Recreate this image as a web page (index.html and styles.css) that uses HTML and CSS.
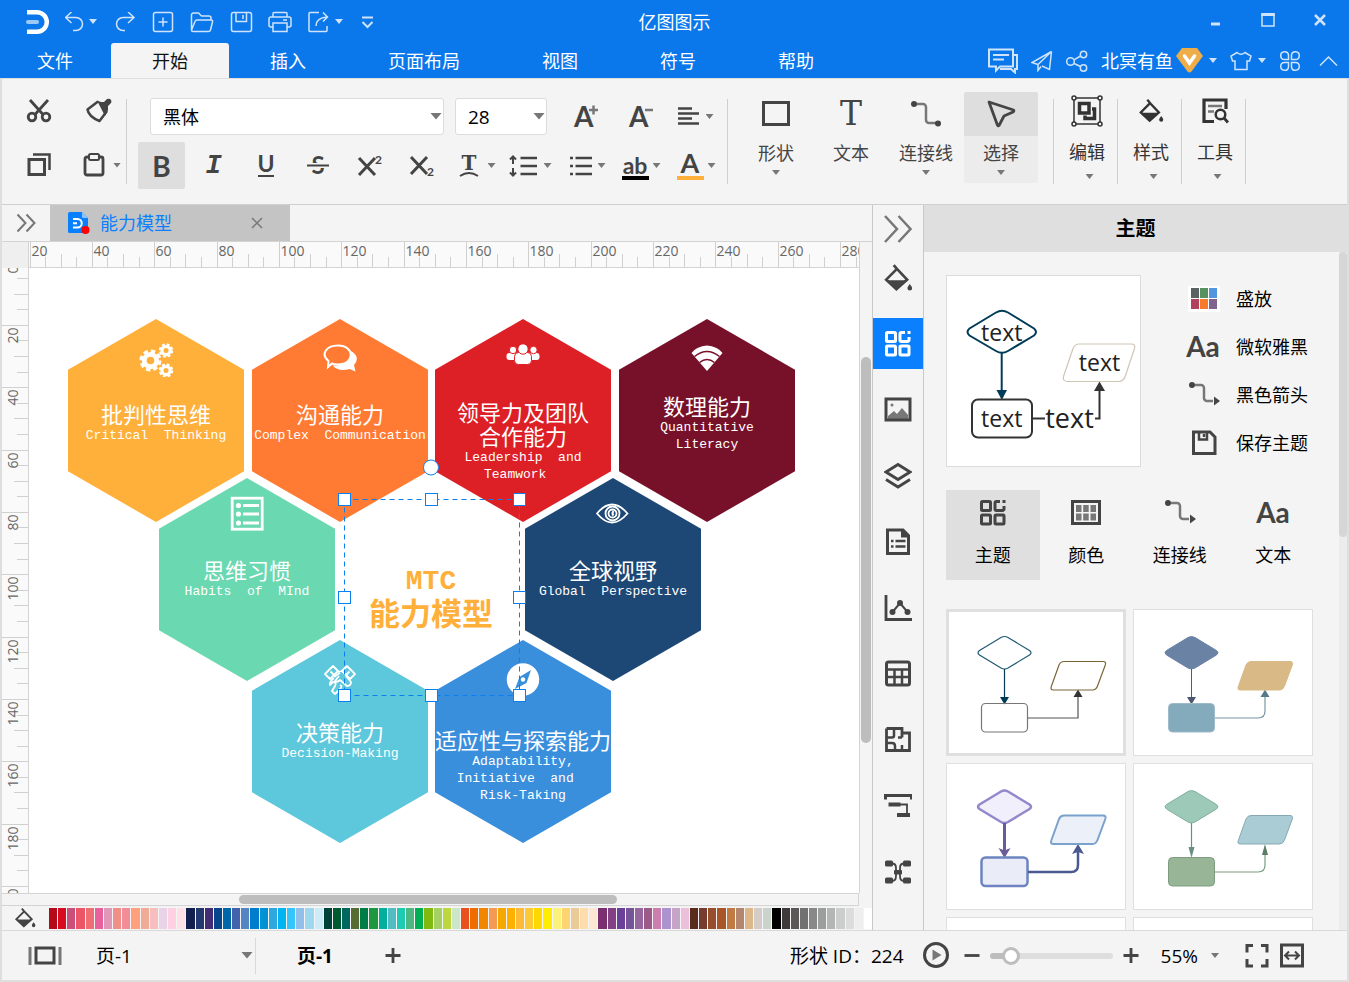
FILE: index.html
```html
<!DOCTYPE html>
<html lang="zh-CN">
<head>
  <meta charset="utf-8">
  <meta name="viewport" content="width=device-width, initial-scale=1">
  <title>亿图图示</title>
  <link rel="stylesheet" href="styles.css">
</head>
<body>
  <!-- Shared icons -->
  <svg class="sprite" aria-hidden="true">
    <symbol id="i-bucket" viewBox="0 0 28 28">
      <path d="M10 2l3 3.500M13 5.500L3 15.500l9.500 9 10-9z" stroke-width="2.500"/>
      <path d="M3 16h19.500L12.500 25.500z" fill="currentColor" stroke="none"/>
      <path d="M25 19.500c1.500 2 2.200 3 2.200 4a2.200 2.200 0 0 1-4.400 0c0-1 .7-2 2.200-4z" fill="currentColor" stroke="none"/>
    </symbol>
    <symbol id="i-theme" viewBox="0 0 28 28">
      <g stroke-width="3">
        <rect x="2.500" y="2.500" width="9" height="9" rx="1"/>
        <rect x="2.500" y="16" width="9" height="9" rx="1"/>
        <rect x="16" y="16" width="9" height="9" rx="1"/>
        <path d="M21 2.500h-3.500a1.500 1.500 0 0 0-1.500 1.500v6a1.500 1.500 0 0 0 1.500 1.500h6a1.500 1.500 0 0 0 1.500-1.500V7M23.500 2.500h3"/>
      </g>
    </symbol>
    <symbol id="i-link" viewBox="0 0 32 28">
      <path d="M6 4h7a3 3 0 0 1 3 3v13a3 3 0 0 0 3 3h7" stroke="#777" stroke-width="2.500"/>
      <circle cx="4" cy="4" r="3" fill="currentColor" stroke="none"/>
      <circle cx="28" cy="23.500" r="3" fill="currentColor" stroke="none"/>
    </symbol>
    <symbol id="i-link-arrow" viewBox="0 0 32 28">
      <path d="M7 4h6a3 3 0 0 1 3 3v10a3 3 0 0 0 3 3h6" stroke="#777" stroke-width="2.500"/>
      <circle cx="4" cy="4" r="3" fill="currentColor" stroke="none"/>
      <path d="M26 15.500l6 4.500-6 4.500z" fill="currentColor" stroke="none"/>
    </symbol>
    <symbol id="i-gear" viewBox="-12 -12 24 24">
      <circle r="6.500" stroke="#fff" stroke-width="5" fill="none"/>
      <circle r="9.500" stroke="#fff" stroke-width="4" stroke-dasharray="4.460 3" fill="none"/>
    </symbol>
  </svg>

  <header class="header">
    <div class="titlebar">
      <div class="quick">
        <svg class="icon" width="24" height="26" viewBox="0 0 24 26" role="img" aria-label="亿图">
          <path d="M1 3.200h10a9.800 9.800 0 0 1 0 19.600H1" stroke="#fff" stroke-width="4.400"/>
          <path d="M2 13h9" stroke="#9ccaf8" stroke-width="4" stroke-linecap="round"/>
        </svg>
        <button class="quick-btn" aria-label="撤销">
          <svg class="icon thin" width="20" height="20" viewBox="0 0 20 20"><path d="M6.500 0L.5 5.500 6.500 11M.5 5.500H11a6.500 6.500 0 0 1 0 13H8"/></svg>
          <i class="caret"></i>
        </button>
        <button class="quick-btn" aria-label="重做">
          <svg class="icon thin" width="24" height="20" viewBox="0 0 24 20"><path d="M16 0l6 5.500L16 11M22 5.500H11a6.500 6.500 0 0 0 0 13h2"/></svg>
        </button>
        <button class="quick-btn" aria-label="新建">
          <svg class="icon thin" width="24" height="22" viewBox="0 0 24 22"><rect x="2.500" y="1.500" width="19" height="19" rx="2"/><path d="M12 6.500v9M7.500 11h9"/></svg>
        </button>
        <button class="quick-btn" aria-label="打开">
          <svg class="icon thin" width="24" height="22" viewBox="0 0 24 22"><path d="M1.500 19V4a2 2 0 0 1 2-2h5l3 3h7.500a2 2 0 0 1 2 2v2M1.500 19L5 10.500q.5-1.500 2-1.500h14q2 0 1.500 2l-2 8q-.5 1.500-2 1.500H3q-1.500 0-1.500-1.500z"/></svg>
        </button>
        <button class="quick-btn" aria-label="保存">
          <svg class="icon thin" width="24" height="22" viewBox="0 0 24 22"><rect x="2.500" y="1.500" width="20" height="19" rx="2"/><path d="M7 1.500v9h10.500v-9M14 4v4"/></svg>
        </button>
        <button class="quick-btn" aria-label="打印">
          <svg class="icon thin" width="24" height="22" viewBox="0 0 24 22"><path d="M5 6V2.500q0-1 1-1h12q1 0 1 1V6M5 16H3q-2 0-2-2V8q0-2 2-2h18q2 0 2 2v6q0 2-2 2h-2M5 12h14v8.500H5zM15 9h4"/></svg>
        </button>
        <button class="quick-btn" aria-label="导出">
          <svg class="icon thin" width="24" height="22" viewBox="0 0 24 22"><path d="M12 1.500H3q-1 0-1 1v17q0 1 1 1h16q1 0 1-1V15M9 15q0-8 11-9M16 1.500L20.500 6 16 10.500"/></svg>
          <i class="caret"></i>
        </button>
        <button class="quick-btn" aria-label="更多">
          <svg class="icon" width="18" height="14" viewBox="0 0 18 14"><path d="M4 2.500h11M4.500 7L9.500 12l5-5"/></svg>
        </button>
      </div>
      <h1 class="app-title">亿图图示</h1>
      <div class="window-btns">
        <button aria-label="最小化"><svg class="icon" width="16" height="16" viewBox="0 0 16 16"><path d="M3 12h9" stroke-width="3"/></svg></button>
        <button aria-label="最大化"><svg class="icon" width="16" height="16" viewBox="0 0 16 16"><path d="M2 2v12h12V2" stroke-width="1.500"/><path d="M1.200 2.500h13.600" stroke-width="3"/></svg></button>
        <button aria-label="关闭"><svg class="icon" width="16" height="16" viewBox="0 0 16 16"><path d="M3 3l10 10M13 3L3 13" stroke-width="2.500"/></svg></button>
      </div>
    </div>

    <div class="menubar">
      <nav class="tabs">
        <button class="tab tab-file">文件</button>
        <button class="tab active">开始</button>
        <button class="tab">插入</button>
        <button class="tab">页面布局</button>
        <button class="tab">视图</button>
        <button class="tab">符号</button>
        <button class="tab">帮助</button>
      </nav>
      <div class="account">
        <button aria-label="消息"><svg class="icon" width="30" height="26" viewBox="0 0 30 26"><path d="M1 1.500h24v17H12l-4 4v-4H1zM25 7h4v14h-2v3.500L23 21H12M5 7h16M5 11.500h11"/></svg></button>
        <button aria-label="发送"><svg class="icon thin" width="22" height="22" viewBox="0 0 22 22"><path d="M20.500 1.500L1 12.500l6 2v6l3-4M20.500 1.500L7 14.500M20.500 1.500l-2 18-7.500-3.500"/></svg></button>
        <button aria-label="分享"><svg class="icon thin" width="22" height="22" viewBox="0 0 22 22"><circle cx="4.500" cy="11.500" r="3.800"/><circle cx="17.500" cy="4.500" r="3.200"/><circle cx="17.500" cy="18" r="3.200"/><path d="M8 9.800l6.500-3.800M8 13.500l6.500 3"/></svg></button>
        <button class="user">
          <span>北冥有鱼</span>
          <svg width="27" height="25" viewBox="0 0 27 25"><path d="M6 0h15l6 8-11.500 15.500q-2 2-4 0L0 8z" fill="#edad48"/><path d="M8.500 8l5 7 5-7" fill="none" stroke="#fff" stroke-width="3.500" stroke-linecap="round"/></svg>
          <i class="caret"></i>
        </button>
        <button class="user" aria-label="皮肤">
          <svg class="icon thin" width="22" height="20" viewBox="0 0 22 20"><path d="M7 1.500q4 3.500 8 0l6 3.500-1.500 5H17v8.500H5V10H2.500L1 5z"/></svg>
          <i class="caret"></i>
        </button>
        <button aria-label="应用"><svg class="icon thin" width="22" height="22" viewBox="0 0 22 22"><path d="M9.500 9.500V5.200a3.900 3.900 0 1 0-4 4.300zM12.500 9.500V5.200a3.900 3.900 0 1 1 4 4.300zM9.500 12.500v4.300a3.900 3.900 0 1 1-4-4.300zM12.500 12.500v4.300a3.900 3.900 0 1 0 4-4.300z"/></svg></button>
        <button aria-label="收起"><svg class="icon thin" width="30" height="12" viewBox="0 0 30 12"><path d="M6 10.500L14.500 2l8.500 8.500"/></svg></button>
      </div>
    </div>
  </header>

  <div class="frame">
    <!-- Ribbon -->
    <section class="ribbon">
      <div class="clipboard">
        <button aria-label="剪切"><svg class="icon" width="26" height="26" viewBox="0 0 26 26"><path d="M4 2l13 14.500M22 2L9 16.500" stroke-width="2.800"/><circle cx="6" cy="19" r="3.800" stroke-width="2.800"/><circle cx="20" cy="19" r="3.800" stroke-width="2.800"/></svg></button>
        <button aria-label="格式刷"><svg class="icon" width="28" height="26" viewBox="0 0 28 26"><path d="M14 3.500L3.500 11.500q1 7 12 11.500l7.500-10" stroke-width="2.500" stroke-linejoin="round"/><path d="M13 2.500l4 1.500 3 0 3-3q3-1 4 1t0 3l-3 3v4l-3 6z" fill="currentColor" stroke="none"/></svg></button>
        <button aria-label="复制"><svg class="icon" width="26" height="26" viewBox="0 0 26 26"><rect x="3" y="7.500" width="15.500" height="15" stroke-width="3"/><path d="M7 2.500h16.500V18" stroke-width="2.500"/></svg></button>
        <button class="paste" aria-label="粘贴"><svg class="icon" width="24" height="26" viewBox="0 0 24 26"><rect x="3" y="5" width="18" height="18" rx="2" stroke-width="2.800"/><rect x="7" y="2" width="10" height="6" rx="1.500" fill="#f4f4f4"/></svg><i class="caret"></i></button>
      </div>
      <span class="divider"></span>

      <div class="font-group">
        <div class="font-row">
          <span class="dropdown font-name"><select aria-label="字体"><option>黑体</option></select></span>
          <span class="dropdown font-size"><select aria-label="字号"><option>28</option></select></span>
          <span class="font-steps">
            <button class="step" aria-label="增大字号"><svg class="glyph" width="30" height="28"><text x="3" y="24" font-size="28">A</text><path d="M18 7h9M22.500 2.500v9" stroke="#777" stroke-width="2.500"/></svg></button>
            <button class="step" aria-label="减小字号"><svg class="glyph" width="30" height="28"><text x="3" y="24" font-size="28">A</text><path d="M19 7h8" stroke="#777" stroke-width="2.500"/></svg></button>
            <button class="split" aria-label="对齐"><svg class="icon" width="28" height="28" viewBox="0 0 28 28"><path d="M5 5.500h14M5 10.500h21M5 15.500h14M5 20.500h21" stroke-width="2.500"/></svg><i class="caret"></i></button>
          </span>
        </div>
        <div class="format-row">
          <button class="format active" aria-label="加粗"><span class="bold">B</span></button>
          <button class="format" aria-label="斜体"><span class="italic">I</span></button>
          <button class="format" aria-label="下划线"><svg class="glyph" width="28" height="28"><text x="14" y="20" font-size="23" text-anchor="middle">U</text><path d="M6 24h16"/></svg></button>
          <button class="format" aria-label="删除线"><svg class="glyph" width="28" height="28"><text x="14" y="22" font-size="24" text-anchor="middle">S</text><path d="M3 13.500h22" stroke="#f4f4f4" stroke-width="5"/><path d="M3 13.500h22"/></svg></button>
          <button class="format" aria-label="上标"><svg class="glyph" width="28" height="28"><path d="M3 6l16 17M19 6L3 23" stroke-width="3"/><text x="19" y="12" font-size="12">2</text></svg></button>
          <button class="format" aria-label="下标"><svg class="glyph" width="28" height="28"><path d="M3 5l16 17M19 5L3 22" stroke-width="3"/><text x="19" y="24" font-size="12">2</text></svg></button>
          <button class="split" aria-label="文字效果"><svg class="glyph" width="28" height="28"><text class="slab strong" x="14" y="18" font-size="20" text-anchor="middle">T</text><path d="M5 24q9-6 18 0"/></svg><i class="caret"></i></button>
          <button class="split" aria-label="行距"><svg class="icon" width="30" height="28" viewBox="0 0 30 28"><path d="M4 5v7M1 7.500L4 4.500l3 3M4 16v7M1 20.500l3 3 3-3"/><path d="M11.500 6H28M11.500 14H28M11.500 22H28" stroke-width="2.500"/></svg><i class="caret"></i></button>
          <button class="split" aria-label="项目符号"><svg class="icon" width="28" height="28" viewBox="0 0 28 28"><path d="M10.500 6H27M10.500 14H27M10.500 22H27M5 6h3M5 14h3M5 22h3" stroke-width="2.500"/></svg><i class="caret"></i></button>
          <button class="split" aria-label="突出显示"><svg class="glyph" width="28" height="28"><text x="15" y="22" font-size="23" text-anchor="middle">ab</text><path d="M2 26h27" stroke="#000" stroke-width="4"/></svg><i class="caret"></i></button>
          <button class="split" aria-label="字体颜色"><svg class="glyph" width="28" height="28"><text x="15" y="21" font-size="27" text-anchor="middle">A</text><path d="M2 26h27" stroke="#ffb03b" stroke-width="4"/></svg><i class="caret"></i></button>
        </div>
      </div>
      <span class="divider"></span>

      <div class="tools">
        <button class="tool"><span class="tool-icon"><svg class="icon" width="30" height="28" viewBox="0 0 30 28"><rect x="2.500" y="2.500" width="25" height="22" stroke-width="3"/></svg></span>形状<i class="caret"></i></button>
        <button class="tool"><span class="tool-icon"><svg class="glyph" width="34" height="34"><text class="slab" x="17" y="28" font-size="33" text-anchor="middle">T</text></svg></span>文本</button>
        <button class="tool"><span class="tool-icon"><svg class="icon" width="32" height="28"><use href="#i-link"/></svg></span>连接线<i class="caret"></i></button>
        <button class="tool active"><span class="tool-icon"><svg class="icon" width="30" height="30" viewBox="0 0 30 30"><path d="M3 3l24.500 8q1 1-.5 2l-9 4-5 9.500q-1 1-1.600-.5z" stroke-width="2.800" stroke-linejoin="round"/></svg></span>选择<i class="caret"></i></button>
      </div>
      <span class="divider"></span>
      <button class="tool tool-menu"><span class="tool-icon"><svg class="icon" width="32" height="32" viewBox="0 0 32 32"><path d="M3 3h26v26H3z" stroke-width="1.500"/><g fill="#f4f4f4" stroke-width="1.500"><circle cx="3" cy="3" r="2"/><circle cx="29" cy="3" r="2"/><circle cx="3" cy="29" r="2"/><circle cx="29" cy="29" r="2"/></g><rect x="8.500" y="8.500" width="9.500" height="9.500" stroke-width="3.500"/><path d="M21 14h2.500v9.500H14v-3" stroke-width="3.500"/></svg></span>编辑<i class="caret"></i></button>
      <span class="divider"></span>
      <button class="tool tool-menu"><span class="tool-icon"><svg class="icon" width="26" height="26"><use href="#i-bucket"/></svg></span>样式<i class="caret"></i></button>
      <span class="divider"></span>
      <button class="tool tool-menu"><span class="tool-icon"><svg class="icon" width="28" height="28" viewBox="0 0 28 28"><path d="M13 24.500H3V3h22v9" stroke-width="3.200"/><path d="M7 9h14M7 14.500h6" stroke="#777" stroke-width="2.500"/><circle cx="19.500" cy="17.500" r="4.800" stroke-width="2.500"/><path d="M23 21l4 4.500" stroke-width="2.800"/></svg></span>工具<i class="caret"></i></button>
      <span class="divider"></span>
    </section>

    <main class="workspace">
      <section class="document">
        <div class="doc-tabs">
          <button class="expand" aria-label="展开"><svg class="icon" width="20" height="20" viewBox="0 0 20 20"><path d="M1.500 1.500l8 8.500-8 8.500M10.500 1.500l8 8.500-8 8.500"/></svg></button>
          <div class="doc-tab">
            <svg width="22" height="22" viewBox="0 0 22 22"><path d="M1.500 0H14l6 6v13.500q0 1.500-1.500 1.500h-17Q0 21 0 19.500v-18Q0 0 1.500 0z" fill="#0a80ff"/><path d="M14 0v4.500q0 1.500 1.500 1.500H20z" fill="#8fc5ff"/><path d="M5 7h4.500a4 4 0 0 1 0 8.500H5M5 11.200h4" fill="none" stroke="#fff" stroke-width="2"/><circle cx="17.500" cy="18" r="4" fill="red"/></svg>
            <span>能力模型</span>
            <button aria-label="关闭标签"><svg class="icon thin" width="12" height="12" viewBox="0 0 12 12"><path d="M1 1l10 10M11 1L1 11"/></svg></button>
          </div>
        </div>

        <div class="board">
          <div class="corner"></div>
          <svg class="ruler ruler-x" id="rulerX"></svg>
          <div class="corner-end"></div>
          <svg class="ruler ruler-y" id="rulerY"></svg>

          <div class="canvas">
            <div class="node thinking">
              <svg class="node-icon" width="36" height="36" viewBox="0 0 36 36"><use href="#i-gear" x="1" y="8" width="23" height="23"/><use href="#i-gear" x="20.500" y="2" width="15" height="15"/><use href="#i-gear" x="20.500" y="22" width="15" height="15"/></svg>
              <div class="node-text"><h2>批判性思维</h2><p>Critical  Thinking</p></div>
            </div>
            <div class="node communication">
              <svg class="node-icon" width="36" height="36" viewBox="0 0 36 36"><path d="M29 10q10 6 3 14l1.500 6.500-6-2.500q-11 3-17-3.500 18 1 18.500-14.500z" fill="#fff"/><path d="M16 4.500c17 0 17 19 0 19q-4 0-6-1l-4 3.500.5-6C-1 14 3 4.500 16 4.500z" fill="#ff7b33" stroke="#fff" stroke-width="2"/></svg>
              <div class="node-text"><h2>沟通能力</h2><p>Complex  Communication</p></div>
            </div>
            <div class="node leadership">
              <svg class="node-icon" width="36" height="36" viewBox="0 0 36 36" fill="#fff" stroke="#dd1f26"><rect x="1.500" y="12" width="13" height="7" rx="3" stroke="none"/><rect x="21.500" y="12" width="13" height="7" rx="3" stroke="none"/><circle cx="8" cy="9" r="3.700"/><circle cx="28.500" cy="9" r="3.700"/><rect x="9.500" y="11.500" width="17" height="12" rx="4"/><circle cx="18" cy="8" r="5.200"/></svg>
              <div class="node-text"><h2>领导力及团队
合作能力</h2><p>Leadership  and
Teamwork  </p></div>
            </div>
            <div class="node literacy">
              <svg class="node-icon" width="36" height="36" viewBox="0 0 36 36"><path d="M18 30L2.500 12q2-3 6-5 9.500-5 19 0 4 2 6 5z" fill="#fff"/><path d="M5.500 15.500q12.500-10 25 0M10.500 21.500q7.500-6 15 0" fill="none" stroke="#77112a" stroke-width="1.600"/></svg>
              <div class="node-text"><h2>数理能力</h2><p>Quantitative
Literacy</p></div>
            </div>
            <div class="node habits middle">
              <svg class="node-icon" width="36" height="36" viewBox="0 0 36 36" fill="none" stroke="#fff" stroke-width="2.800"><rect x="3.200" y="2.200" width="30" height="31"/><path d="M14 9.500h16M14 18h16M14 27h16"/><g fill="#fff" stroke="none"><circle cx="9.500" cy="9.500" r="2.600"/><circle cx="9.500" cy="18" r="2.600"/><circle cx="9.500" cy="27" r="2.600"/></g></svg>
              <div class="node-text"><h2>思维习惯</h2><p>Habits  of  MInd</p></div>
            </div>
            <div class="node perspective middle">
              <svg class="node-icon" width="36" height="36" viewBox="0 0 36 36" fill="none" stroke="#fff" stroke-width="1.800"><path d="M2 17.500q15-18 30.500 0-15.500 18-30.500 0z"/><circle cx="17.500" cy="17.500" r="7"/><circle cx="17.500" cy="17.500" r="4"/><path d="M18.500 15q-2 2.500 0 4.500" stroke-width="2"/></svg>
              <div class="node-text"><h2>全球视野</h2><p>Global  Perspective</p></div>
            </div>
            <div class="node decision lower">
              <svg class="node-icon" width="36" height="36" viewBox="0 0 36 36" fill="none" stroke="#fff" stroke-width="1.800" stroke-linejoin="round"><path d="M3 12l8-8 5 5-8 8zM33 12l-8-8-5 5 8 8zM8.500 9.500l3 3M27.500 9.500l-3 3"/><path d="M16 10l4-1M12 15q4-3 6-4M24 14l5 6q0 4-4 4l-7-6q-3 3-5 1l4-5"/><path d="M12 16q-5 4-4 7l3-3q4 0 2 4l-3 5 3 3 5-5q3-3 0-4M18 31l4 1 5-4"/></svg>
              <div class="node-text"><h2>决策能力</h2><p>Decision-Making</p></div>
            </div>
            <div class="node adaptability">
              <svg class="node-icon" width="36" height="36" viewBox="0 0 36 36"><circle cx="18" cy="17.500" r="16.200" fill="#fff"/><path d="M26 8l-4.500 13L10 27l4.500-12z" fill="#3a8fdd"/><circle cx="18" cy="17.500" r="2.200" fill="#fff"/></svg>
              <div class="node-text"><h2>适应性与探索能力</h2><p>Adaptability,
Initiative  and  
Risk-Taking</p></div>
            </div>
            <div class="center-title"><span>MTC</span>
能力模型</div>

            <!-- Selection box of the centre shape -->
            <svg class="selection" width="200" height="250" viewBox="0 0 200 250">
              <path d="M15.500 39.500h175v196h-175z" stroke-dasharray="5 4"/>
              <circle cx="102" cy="7.500" r="7.500"/>
              <g>
                <rect x="9.500" y="33.500" width="12" height="12"/><rect x="96.500" y="33.500" width="12" height="12"/><rect x="184.500" y="33.500" width="12" height="12"/>
                <rect x="9.500" y="131.500" width="12" height="12"/><rect x="184.500" y="131.500" width="12" height="12"/>
                <rect x="9.500" y="229.500" width="12" height="12"/><rect x="96.500" y="229.500" width="12" height="12"/><rect x="184.500" y="229.500" width="12" height="12"/>
              </g>
            </svg>
          </div>
          <div class="scroll-y"><span></span></div>
          <div class="scroll-x"><span></span></div>
        </div>

        <div class="palette">
          <svg class="icon" width="22" height="22"><use href="#i-bucket"/></svg>
          <div class="swatches" id="swatches"></div>
        </div>
      </section>

      <aside class="rail">
        <button class="rail-toggle" aria-label="收起面板"><svg class="icon" width="28" height="28" viewBox="0 0 28 28"><path d="M1 1l12 13L1 27M14.500 1l12 13-12 13" stroke="#777" stroke-width="2.500"/></svg></button>
        <div class="rail-items">
          <button aria-label="填充"><svg class="icon" width="30" height="30"><use href="#i-bucket"/></svg></button>
          <button class="active" aria-label="主题"><svg class="icon" width="28" height="28"><use href="#i-theme"/></svg></button>
          <button aria-label="图片"><svg class="icon" width="28" height="26" viewBox="0 0 28 26"><path d="M4 22v-3l6-5 3 3 5-6 6 7v4z" fill="#777" stroke="none"/><rect x="2" y="2" width="24" height="21" stroke-width="3"/><circle cx="8" cy="8" r="1.500" fill="#777" stroke="none"/></svg></button>
          <button aria-label="图层"><svg class="icon" width="28" height="28" viewBox="0 0 28 28"><path d="M2 10L14 2.500 26 10l-12 7.500z" stroke-width="2.800"/><path d="M2 17.500L14 25l12-7.500" stroke-width="2.800"/></svg></button>
          <button aria-label="页面"><svg class="icon" width="26" height="28" viewBox="0 0 26 28"><path d="M2.500 2H18l5.500 5.500V25.500h-21z" stroke-width="3"/><path d="M17 2v6.500h6" fill="currentColor"/><path d="M6 13h2.500M6 18.500h2.500M10.500 13h10M10.500 18.500h10" stroke-width="2.500"/></svg></button>
          <button aria-label="图表"><svg class="icon" width="28" height="28" viewBox="0 0 28 28"><path d="M2 1v24.500h26" stroke-width="2.800"/><path d="M8.500 18L16 9l7.500 9"/><g fill="currentColor" stroke="none"><circle cx="8.500" cy="18" r="3"/><circle cx="16" cy="9" r="3"/><circle cx="23.500" cy="18" r="3"/></g></svg></button>
          <button aria-label="表格"><svg class="icon" width="28" height="28" viewBox="0 0 28 28"><rect x="2.500" y="2" width="23" height="23" rx="2" stroke-width="3"/><path d="M2.500 9.500h23M2.500 17h23M10.500 9.500V25M18 9.500V25" stroke-width="2.500"/></svg></button>
          <button aria-label="平面图"><svg class="icon" width="28" height="28" viewBox="0 0 28 28"><path d="M2.500 2.500H18v9M18 7h7.500v17.500h-23v-22" stroke-width="2.800"/><path d="M3 11.500h5q2 0 2-2V7M3 17h5q3 0 3 3v4.500M18 19v6M18 11.500h-4M10 2.500v6" stroke-width="2.500"/></svg></button>
          <button aria-label="甘特图"><svg class="icon" width="28" height="28" viewBox="0 0 28 28"><path d="M1.500 7.500v-4h26v4" stroke-width="3"/><path d="M4.500 12.500h12M13 23h13" stroke-width="4"/><path d="M16 12.500h7V21" stroke-width="1.800"/></svg></button>
          <button aria-label="思维导图"><svg class="icon" width="28" height="28" viewBox="0 0 28 28"><path d="M6 5.500h2q4 0 4 4.500v8q0 5-4 5H6M22 5.500h-2q-4 0-4 4.500v8q0 5 4 5h2" stroke-width="1.800"/><g fill="currentColor" stroke="none"><rect x="1" y="2.500" width="8" height="6" rx="1.500"/><rect x="19" y="2.500" width="8" height="6" rx="1.500"/><rect x="1" y="19.500" width="8" height="6" rx="1.500"/><rect x="19" y="19.500" width="8" height="6" rx="1.500"/><rect x="10" y="12" width="8" height="4.500" rx="1"/></g></svg></button>
        </div>
      </aside>

      <aside class="panel">
        <h2 class="panel-title">主题</h2>
        <div class="panel-body">
          <div class="panel-content">
            <div class="current">
              <svg class="preview" viewBox="1 1 193 190" fill="none" stroke="#333" stroke-width="2">
                <path d="M50 37.500q6-3.500 12 0l26 16q4 3.500 0 7L62 76q-6 3.500-12 0L23.500 60.500q-4-3.500 0-7z" stroke="#003c58"/>
                <path d="M55.700 78v40" stroke="#003c58"/><path d="M50.500 115h10.500l-5.200 10z" fill="#003c58" stroke="none"/>
                <rect x="26" y="124.500" width="60" height="38" rx="6"/>
                <path d="M86 143.500h13M149 143.500h4.500V113"/><path d="M148 116l5.500-9.500 5.500 9.500z" fill="#333" stroke="none"/>
                <path d="M127 73.500q2-4.500 6-4.500h52q5 0 3.500 4.500l-9 27q-2 6-7 6h-51q-5 0-4-5z" stroke="#cfc6b6" stroke-width="1.200"/>
                <g class="preview-text"><text x="55.700" y="66">text</text><text x="153.500" y="96">text</text><text x="55.700" y="152">text</text><text class="large" x="123.500" y="153">text</text></g>
              </svg>
              <ul class="options">
                <li><button><svg width="32" height="26" viewBox="0 0 32 26"><path d="M0 0h32v26H0z" fill="#fff"/><path d="M3 2h8v10H3z" fill="#596261"/><path d="M12 2h8v10h-8z" fill="#56915f"/><path d="M21 2h8v10h-8z" fill="#5296e0"/><path d="M3 13h8v10H3z" fill="#b3405d"/><path d="M12 13h8v10h-8z" fill="#f67a2c"/><path d="M21 13h8v10h-8z" fill="#81648d"/></svg>盛放</button></li>
                <li><button><svg class="glyph" width="36" height="28"><text x="17" y="24" font-size="28" text-anchor="middle">Aa</text></svg>微软雅黑</button></li>
                <li><button><svg class="icon" width="32" height="28"><use href="#i-link-arrow"/></svg>黑色箭头</button></li>
                <li><button><svg class="icon" width="28" height="28" viewBox="0 0 28 28"><path d="M3.500 3H20l5 5v16.500H3.500z" stroke-width="3"/><path d="M9 3v7.500h8V3M14 5v3" stroke-width="2.500"/></svg>保存主题</button></li>
              </ul>
            </div>

            <div class="theme-tabs">
              <button class="active"><svg class="icon" width="28" height="28"><use href="#i-theme"/></svg>主题</button>
              <button><svg class="icon" width="30" height="28" viewBox="0 0 30 28"><rect x="1.500" y="2.500" width="27" height="22" stroke-width="3"/><path d="M5 6h5.500v7H5zM12.200 6h5.500v7h-5.500zM19.500 6H25v7h-5.500zM5 14.500h5.500v7H5zM12.200 14.500h5.500v7h-5.500zM19.500 14.500H25v7h-5.500z" fill="#777" stroke="none"/></svg>颜色</button>
              <button><svg class="icon" width="32" height="28"><use href="#i-link-arrow"/></svg>连接线</button>
              <button><svg class="glyph" width="36" height="28"><text x="18" y="24" font-size="28" text-anchor="middle">Aa</text></svg>文本</button>
            </div>

            <div class="cards">
              <button class="card selected" aria-label="主题一">
                <svg viewBox="3 3 174 141" fill="none" stroke="#777" stroke-width="1.200">
                  <path d="M55 28.500q3.500-2 7 0L83.500 41.500q3 2.200 0 4.500L62 59q-3.500 2-7 0L33.500 46q-3-2.300 0-4.500z" stroke="#1f5a72"/>
                  <path d="M58.500 60v29" stroke="#003c58"/><path d="M54 88h9l-4.500 7.500z" fill="#003c58" stroke="none"/>
                  <rect x="35.500" y="94.500" width="46" height="28.500" rx="4"/>
                  <path d="M82 109h50V88" stroke="#555"/><path d="M127.500 88h9l-4.500-7.500z" fill="#333" stroke="none"/>
                  <path d="M113 56q1.500-3.500 5-3.500h39q3.500 0 2.300 3.500l-7.800 21q-1.500 4-5 4h-39q-3.500 0-2.200-3.500z" stroke="#7a6537"/>
                </svg>
              </button>
              <button class="card" aria-label="主题二">
                <svg viewBox="1 1 178 145" fill="none">
                  <path d="M55 28.500q3.500-2 7 0L83.500 41.500q3 2.200 0 4.500L62 59q-3.500 2-7 0L33.500 46q-3-2.300 0-4.500z" fill="#6a82a4" stroke="#6a82a4"/>
                  <path d="M58.500 60v29" stroke="#4b5f7c"/><path d="M54 88h9l-4.500 7.500z" fill="#4b5870"/>
                  <rect x="35.500" y="94.500" width="46" height="28.500" rx="4" fill="#84abbc" stroke="#9dbbc8"/>
                  <path d="M82 109h43q7 0 7-7V88" stroke="#7896a4" stroke-width="1.200"/><path d="M127.500 88h9l-4.500-7.500z" fill="#56798a"/>
                  <path d="M113 56q1.500-3.500 5-3.500h39q3.500 0 2.300 3.500l-7.800 21q-1.500 4-5 4h-39q-3.500 0-2.200-3.500z" fill="#d9b985" stroke="#d9b985"/>
                </svg>
              </button>
              <button class="card" aria-label="主题三">
                <svg viewBox="1 1 178 145" fill="none">
                  <path d="M55 28.500q3.500-2 7 0L83.500 41.500q3 2.200 0 4.500L62 59q-3.500 2-7 0L33.500 46q-3-2.300 0-4.500z" fill="#f1effb" stroke="#9288cc" stroke-width="2.500"/>
                  <path d="M58.500 60v29" stroke="#695c99" stroke-width="3"/><path d="M52.500 85l6 2.500 6-2.500-6 10z" fill="#695c99"/>
                  <rect x="35.500" y="94.500" width="46" height="28.500" rx="4" fill="#eaedf8" stroke="#6d84c0" stroke-width="2.500"/>
                  <path d="M82 109h43q7 0 7-7V88" stroke="#4a5a90" stroke-width="2.500"/><path d="M126 91l6-10 6 10-6-2z" fill="#4a5a90"/>
                  <path d="M113 56q1.500-3.500 5-3.500h39q3.500 0 2.300 3.500l-7.800 21q-1.500 4-5 4h-39q-3.500 0-2.200-3.500z" fill="#ecf1f9" stroke="#7aa2cb" stroke-width="2"/>
                </svg>
              </button>
              <button class="card" aria-label="主题四">
                <svg viewBox="1 1 178 145" fill="none">
                  <path d="M55 28.500q3.500-2 7 0L83.500 41.500q3 2.200 0 4.500L62 59q-3.500 2-7 0L33.500 46q-3-2.300 0-4.500z" fill="#9dcab8" stroke="#82ae9d"/>
                  <path d="M58.500 60v29" stroke="#67907f" stroke-width="1.200"/><path d="M55.500 84h6l-3 11z" fill="#67907f"/>
                  <rect x="35.500" y="94.500" width="46" height="28.500" rx="4" fill="#98b697" stroke="#7e9d80"/>
                  <path d="M82 109h43q7 0 7-7V90" stroke="#7c9d80" stroke-width="1.200"/><path d="M129 92h6l-3-11z" fill="#5d7e62"/>
                  <path d="M113 56q1.500-3.500 5-3.500h39q3.500 0 2.300 3.500l-7.800 21q-1.500 4-5 4h-39q-3.500 0-2.200-3.500z" fill="#aaccd5" stroke="#85a9b2"/>
                </svg>
              </button>
              <button class="card" aria-label="主题五"><svg viewBox="1 1 178 145"></svg></button>
              <button class="card" aria-label="主题六"><svg viewBox="1 1 178 145"></svg></button>
            </div>
          </div>
          <div class="panel-scroll"><span></span></div>
        </div>
      </aside>
    </main>

    <footer class="statusbar">
      <button class="pages-btn" aria-label="页面视图"><svg class="icon" width="36" height="22" viewBox="0 0 36 22"><rect x="9" y="3" width="18" height="15" stroke-width="3"/><path d="M3 2v18M33 2v18" stroke="#777" stroke-width="3"/></svg></button>
      <span class="dropdown page-select"><select aria-label="页面"><option>页-1</option></select></span>
      <button class="page-tab">页-1</button>
      <button aria-label="添加页面"><svg class="icon" width="16" height="16" viewBox="0 0 16 16"><path d="M8 0v15M.5 7.500h15" stroke-width="2.800"/></svg></button>
      <div class="status-right">
        <span class="shape-id">形状 ID：224</span>
        <button class="play" aria-label="播放"><svg class="icon" width="28" height="28" viewBox="0 0 28 28"><circle cx="14" cy="13" r="11.500" stroke-width="3"/><path d="M10.500 7.500l9 5.500-9 5.500z" fill="#777" stroke="none"/></svg></button>
        <button aria-label="缩小"><svg class="icon" width="16" height="16" viewBox="0 0 16 16"><path d="M.5 7.500h15" stroke-width="2.800"/></svg></button>
        <input class="zoom" type="range" min="0" max="100" value="12" aria-label="缩放">
        <button aria-label="放大"><svg class="icon" width="16" height="16" viewBox="0 0 16 16"><path d="M8 0v15M.5 7.500h15" stroke-width="2.800"/></svg></button>
        <button class="zoom-value">55% <i class="caret"></i></button>
        <button aria-label="全屏"><svg class="icon" width="24" height="24" viewBox="0 0 24 24"><path d="M2 8.500V1.500h6M16 1.500h6v7M22 15v7h-6M8 22H2v-7" stroke-width="3"/></svg></button>
        <button aria-label="适应宽度"><svg class="icon" width="26" height="26" viewBox="0 0 26 26"><rect x="2.500" y="2" width="21" height="21" stroke-width="3"/><path d="M7 12.500h12M10 8.500l-4 4 4 4M16 8.500l4 4-4 4"/></svg></button>
      </div>
    </footer>
  </div>

  <script src="script.js"></script>
</body>
</html>
```
FILE: styles.css
```css
* {
  box-sizing: border-box;
}
body {
  margin: 0;
  height: 100vh;
  min-height: 600px;
  display: flex;
  flex-direction: column;
  overflow: hidden;
  font: 18px/24px "Open Sans", "Noto Sans CJK SC", sans-serif;
  color: #111;
  background: #f4f4f4;
}
h1, h2, p, ul {
  margin: 0;
  padding: 0;
  font-weight: normal;
}
button {
  display: flex;
  align-items: center;
  justify-content: center;
  margin: 0;
  padding: 0;
  border: none;
  background: none;
  font: inherit;
  color: inherit;
  cursor: pointer;
}
svg {
  flex: none;
  display: block;
}
.sprite {
  position: absolute;
  width: 0;
  height: 0;
}
.icon {
  fill: none;
  stroke: currentColor;
  stroke-width: 2;
}
.thin {
  stroke-width: 1.5;
}
.glyph {
  overflow: visible;
  font-family: Lato, sans-serif;
  font-weight: bold;
  fill: none;
  stroke: currentColor;
  stroke-width: 2;
}
.glyph text {
  fill: currentColor;
  stroke: none;
}
.glyph .slab {
  font-family: "DejaVu Serif", serif;
  font-weight: normal;
}
.glyph .strong {
  font-weight: bold;
}
.caret {
  flex: none;
  width: 8px;
  height: 5px;
  background: currentColor;
  clip-path: polygon(0 0, 100% 0, 50% 100%);
}

/* Header */
.header {
  flex: none;
  background: #0a77eb;
  color: #cfe4fb;
}
.titlebar {
  display: grid;
  grid-template-columns: 1fr auto 1fr;
  align-items: center;
  height: 43px;
}
.quick {
  display: flex;
  align-items: center;
  gap: 15px;
  height: 41px;
  padding-left: 26px;
}
.quick-btn {
  gap: 4px;
}
.app-title {
  font-size: 18px;
  line-height: 24px;
  color: #fff;
}
.window-btns {
  display: flex;
  justify-content: flex-end;
  align-items: center;
  gap: 36px;
  height: 40px;
  padding: 0 21px 4px 0;
}
.menubar {
  display: flex;
  justify-content: space-between;
  height: 35px;
}
.tabs {
  display: flex;
}
.tab {
  padding: 0 41px;
  color: #fff;
}
.tab-file {
  padding: 0 38px 0 37px;
}
.tab.active {
  background: #f4f4f4;
  color: #111;
  border-radius: 3px 3px 0 0;
}
.account {
  display: flex;
  align-items: center;
  gap: 13px;
  padding-right: 5px;
}
.user {
  gap: 6px;
}
.user span {
  color: #fff;
  margin-right: -3px;
}

/* Window frame under the header */
.frame {
  flex: 1;
  min-height: 0;
  display: flex;
  flex-direction: column;
  border: solid #dedede;
  border-width: 1px 2px 2px;
}

/* Ribbon */
.ribbon {
  flex: none;
  display: flex;
  align-items: flex-start;
  height: 126px;
  border-bottom: 1px solid #cfcfcf;
  color: #444;
}
.ribbon .caret {
  background: #777;
}
.divider {
  flex: none;
  width: 1px;
  height: 85px;
  margin-top: 20px;
  background: #cfcfcf;
}
.clipboard {
  display: grid;
  grid-template-columns: 60px 57px;
  grid-auto-rows: 54px;
  padding: 5px 0 0 7px;
}
.paste {
  justify-content: flex-end;
  gap: 7px;
  padding-right: 5px;
}
.font-group {
  padding: 19px 7px 0 11px;
}
.font-row {
  display: flex;
  gap: 11px;
  height: 37px;
  margin-bottom: 7px;
  padding-left: 12px;
}
.dropdown {
  position: relative;
  display: block;
}
.dropdown::after {
  content: "";
  position: absolute;
  right: 2px;
  top: 50%;
  width: 12px;
  height: 7px;
  margin-top: -4px;
  background: #777;
  clip-path: polygon(0 0, 100% 0, 50% 100%);
  pointer-events: none;
}
.dropdown select {
  appearance: none;
  width: 100%;
  height: 100%;
  padding: 0 12px;
  border: 1px solid #dcdcdc;
  border-radius: 3px;
  background: #fff;
  font: inherit;
  color: #000;
}
.font-name {
  width: 294px;
}
.font-size {
  width: 92px;
  font-size: 19px;
}
.font-steps {
  display: flex;
  align-items: center;
}
.step {
  width: 55px;
}
.format-row {
  display: flex;
  gap: 5px;
}
.format {
  width: 47px;
  height: 47px;
  border-radius: 2px;
}
.format.active {
  background: #dedede;
}
.bold {
  font: bold 28px/32px Lato, sans-serif;
}
.italic {
  font: italic bold 27px/32px "Liberation Mono", monospace;
}
.split {
  gap: 5px;
  width: 50px;
}
.tools {
  display: flex;
  gap: 1px;
  padding: 0 15px 0 11px;
}
.tool {
  flex-direction: column;
  justify-content: flex-start;
  width: 74px;
  height: 91px;
  margin-top: 13px;
}
.tool-icon {
  display: flex;
  align-items: center;
  justify-content: center;
  align-self: stretch;
  height: 44px;
  margin-bottom: 5px;
}
.tool .caret {
  margin-top: 5px;
}
.tool.active {
  border-radius: 2px;
  background: linear-gradient(#dedede 44px, #ececec 44px);
}
.tool-menu {
  width: 63px;
  padding-left: 3px;
  color: #333;
}
.tool-menu .tool-icon {
  height: 38px;
  margin-bottom: 10px;
}
.tool-menu .caret {
  margin: 10px 0 0 5px;
}

/* Workspace */
.workspace {
  flex: 1;
  min-height: 0;
  display: flex;
}
.document {
  flex: 1;
  min-width: 0;
  display: flex;
  flex-direction: column;
}
.doc-tabs {
  flex: none;
  display: flex;
  height: 37px;
  border-bottom: 1px solid #d4d4d4;
  color: #777;
}
.expand {
  width: 48px;
}
.doc-tab {
  display: flex;
  align-items: center;
  width: 240px;
  padding: 0 27px 0 18px;
  background: #c4c4c4;
}
.doc-tab span {
  flex: 1;
  margin-left: 10px;
  color: #0a80ff;
}
.board {
  flex: 1;
  min-height: 0;
  display: grid;
  grid-template-columns: 27px 1fr 13px;
  grid-template-rows: 26px 1fr 13px;
}
.corner {
  background: #efefef;
  border-right: 1px solid #d4d4d4;
}
.corner-end {
  border-left: 1px solid #d4d4d4;
}
.ruler {
  width: 100%;
  height: 100%;
  overflow: hidden;
  background: #fafafa;
  font-size: 14px;
  fill: #666;
  stroke: none;
}
.ruler path {
  stroke: #d0d0d0;
}
.ruler-x {
  border-bottom: 1px solid #d4d4d4;
}
.ruler-y {
  border-right: 1px solid #d4d4d4;
}
.canvas {
  position: relative;
  overflow: hidden;
  background: #fff;
}
.scroll-y {
  display: flex;
  justify-content: center;
  align-items: flex-start;
  padding-top: 89px;
  border-left: 1px solid #d4d4d4;
}
.scroll-y span {
  width: 10px;
  height: 72%;
  border-radius: 5px;
  background: #bdbdbd;
}
.scroll-x {
  grid-column: 1 / 3;
  padding: 1px 0 0 237px;
  border: solid #d4d4d4;
  border-width: 1px 1px 1px 0;
}
.scroll-x span {
  display: block;
  width: 61%;
  height: 9px;
  border-radius: 5px;
  background: #bdbdbd;
}

/* Shapes on the canvas */
.node {
  position: absolute;
  width: 176px;
  height: 203px;
  clip-path: polygon(50% 0, 100% 25%, 100% 75%, 50% 100%, 0 75%, 0 25%);
  color: #fff;
}
.node-icon {
  position: absolute;
  left: 70px;
  top: 22px;
}
.node-text {
  position: absolute;
  top: 83px;
  left: 0;
  width: 100%;
  white-space: pre;
  text-align: center;
}
.node h2 {
  font-size: 22px;
  line-height: 24px;
}
.node p {
  margin-top: 1px;
  font: 13px/17px "Liberation Mono", monospace;
}
.middle .node-icon {
  top: 18px;
}
.middle .node-text,
.lower .node-text {
  top: 80px;
}
.leadership .node-text {
  top: 81px;
}
.literacy .node-text {
  top: 75px;
}
.adaptability .node-text {
  top: 88px;
}
.thinking {
  left: 39px;
  top: 51px;
  background: #ffb03b;
}
.communication {
  left: 223px;
  top: 51px;
  background: #ff7b33;
}
.leadership {
  left: 406px;
  top: 51px;
  background: #dd1f26;
}
.literacy {
  left: 590px;
  top: 51px;
  background: #77112a;
}
.habits {
  left: 130px;
  top: 210px;
  background: #6ad8b0;
}
.perspective {
  left: 496px;
  top: 210px;
  background: #1d4876;
}
.decision {
  left: 223px;
  top: 372px;
  background: #5dc7db;
}
.adaptability {
  left: 406px;
  top: 372px;
  background: #3a8fdd;
}
.center-title {
  position: absolute;
  left: 314px;
  top: 295px;
  width: 176px;
  white-space: pre;
  text-align: center;
  font: bold 31px/35px "Liberation Mono", "Noto Sans CJK SC", monospace;
  color: #ffb03b;
}
.center-title span {
  font-size: 28px;
}
.selection {
  position: absolute;
  left: 300px;
  top: 192px;
  overflow: visible;
  fill: none;
  stroke: #0a80f0;
}
.selection rect,
.selection circle {
  fill: #fff;
}

.palette {
  flex: none;
  display: flex;
  align-items: center;
  height: 24px;
  padding-left: 12px;
  color: #444;
}
.swatches {
  flex: 1;
  display: flex;
  gap: 1px;
  height: 21px;
  margin-left: 13px;
}
.swatches button {
  flex: 1;
}

/* Right icon rail */
.rail {
  flex: none;
  width: 52px;
  border: solid #c8c8c8;
  border-width: 0 1px;
  color: #444;
}
.rail button {
  width: 100%;
  height: 51px;
}
.rail .rail-toggle {
  height: 47px;
}
.rail-items {
  display: flex;
  flex-direction: column;
  gap: 15px;
}
.rail .active {
  background: #0a80ff;
  color: #fff;
}

/* Theme panel */
.panel {
  flex: none;
  width: 423px;
  display: flex;
  flex-direction: column;
}
.panel-title {
  flex: none;
  height: 47px;
  background: #dfdfdf;
  font-size: 20px;
  font-weight: bold;
  line-height: 48px;
  text-align: center;
  color: #000;
}
.panel-body {
  flex: 1;
  min-height: 0;
  display: flex;
}
.panel-content {
  flex: 1;
  overflow: hidden;
  padding: 23px 0 0 22px;
}
.current {
  display: flex;
  gap: 45px;
}
.preview {
  width: 195px;
  height: 192px;
  border: 1px solid #dcdcdc;
  background: #fff;
}
.preview-text {
  fill: #222;
  stroke: none;
  font-size: 23px;
  text-anchor: middle;
}
.preview-text .large {
  font-size: 27px;
}
.options {
  list-style: none;
}
.options button {
  gap: 14px;
  height: 48px;
  color: #000;
}
.options svg {
  width: 36px;
  color: #444;
}
.theme-tabs {
  display: grid;
  grid-template-columns: repeat(4, 1fr);
  margin: 23px 19px 29px 0;
}
.theme-tabs button {
  flex-direction: column;
  justify-content: flex-start;
  gap: 16px;
  height: 90px;
  padding-top: 9px;
  color: #000;
}
.theme-tabs svg {
  color: #444;
}
.theme-tabs .active {
  background: #dfdfdf;
}
.cards {
  display: grid;
  grid-template-columns: 1fr 1fr;
  gap: 7px;
  margin-right: 26px;
}
.card {
  border: 1px solid #dfdfdf;
  background: #fff;
}
.card.selected {
  border-width: 3px;
}
.card svg {
  width: 100%;
}
.panel-scroll {
  width: 8px;
  background: #ececec;
}
.panel-scroll span {
  display: block;
  height: 42%;
  border-radius: 4px;
  background: #d6d6d6;
}

/* Status bar */
.statusbar {
  flex: none;
  display: flex;
  align-items: center;
  height: 50px;
  border-top: 1px solid #d9d9d9;
  font-size: 19px;
  color: #444;
}
.pages-btn {
  width: 86px;
}
.page-select {
  width: 168px;
  height: 36px;
  border-right: 1px solid #d9d9d9;
}
.page-select select {
  padding: 0 8px;
  border: none;
  background: none;
}
.page-tab {
  width: 36px;
  margin: 0 52px 0 41px;
  white-space: nowrap;
  font-weight: bold;
  color: #000;
}
.status-right {
  display: flex;
  align-items: center;
  margin-left: auto;
  gap: 10px;
  padding-right: 42px;
}
.shape-id {
  margin-right: 8px;
  color: #000;
}
.play {
  margin-right: 4px;
}
.zoom {
  appearance: none;
  width: 123px;
  height: 18px;
  margin: 0;
  background: none;
}
.zoom::-webkit-slider-runnable-track {
  height: 6px;
  border-radius: 3px;
  background: linear-gradient(90deg, #bdbdbd 17%, #dedede 17%);
}
.zoom::-webkit-slider-thumb {
  appearance: none;
  width: 18px;
  height: 18px;
  margin-top: -6px;
  border: 3px solid #bdbdbd;
  border-radius: 50%;
  background: #fff;
}
.zoom-value {
  gap: 13px;
  margin: 0 16px 0 12px;
  color: #000;
}
.zoom-value .caret {
  background: #777;
}
```
FILE: script.js
```js
const COLORS = [
  "#b50a18", "#d90b20", "#c9507a", "#ec5565", "#f06e72", "#e8609c", "#e198b8", "#f08f88", "#f28c98", "#ffa07c",
  "#efab95", "#f6bebe", "#e8d3e8", "#ffd0e2", "#fee0e6", "#12204e", "#22386e", "#432c76", "#07468c", "#0068a8",
  "#4262ae", "#5484c2", "#007ccc", "#0092d4", "#2fa8e0", "#00b4f4", "#34c6fa", "#90c0ea", "#9ed8ee", "#cdecf8",
  "#004238", "#005a30", "#006660", "#566c30", "#007c48", "#1c9840", "#00b09c", "#52bcc2", "#1cccb2", "#4ab880",
  "#00ae54", "#80ba10", "#a4d064", "#bcd83e", "#cbe7c8", "#e85020", "#ee6c00", "#f28600", "#f49a52", "#f4a800",
  "#ffb000", "#fdba36", "#fbca34", "#ffd800", "#ffec00", "#fbf27e", "#fed470", "#eacb98", "#fedcac", "#fce8d2",
  "#7a3070", "#844084", "#6a4098", "#765498", "#98669e", "#9c5a88", "#cc7eae", "#ac92ce", "#c6a4c8", "#ecc0da",
  "#5a2c1c", "#773c30", "#964e2c", "#a85628", "#c07a44", "#b4866e", "#deb788", "#d4ccc6", "#cad3cc", "#000000",
  "#3e3a39", "#595757", "#727171", "#888888", "#9c9e9d", "#b4b5b5", "#cccdcd", "#dcdcdc", "#eeeeee", "#ffffff"
];

const swatches = document.getElementById("swatches");
COLORS.forEach((color) => {
  const swatch = document.createElement("button");
  swatch.style.background = color;
  swatch.setAttribute("aria-label", color);
  swatches.appendChild(swatch);
});

// 20 ruler units at the current zoom
const STEP = 62.35;

function drawRuler(id, first, origin, vertical) {
  const ruler = document.getElementById(id);
  const length = vertical ? ruler.clientHeight : ruler.clientWidth;
  let path = "";
  let labels = "";
  for (let i = 0; origin + (i * STEP) / 4 < length; i++) {
    const pos = Math.floor(origin + (i * STEP) / 4) + 0.5;
    const size = i % 4 === 0 ? 26 : i % 2 === 0 ? 14 : 11;
    path += vertical ? `M${26 - size} ${pos}H26` : `M${pos} ${26 - size}V26`;
    if (i % 4 === 0) {
      const value = first + (i / 4) * 20;
      labels += vertical
        ? `<text transform="translate(16 ${pos + 2}) rotate(-90)" text-anchor="end">${value}</text>`
        : `<text x="${pos + 1}" y="14">${value}</text>`;
    }
  }
  ruler.innerHTML = `<path d="${path}"/>${labels}`;
}

function drawRulers() {
  drawRuler("rulerX", 20, 1, false);
  drawRuler("rulerY", 0, -5, true);
}

drawRulers();
window.addEventListener("resize", drawRulers);
```
